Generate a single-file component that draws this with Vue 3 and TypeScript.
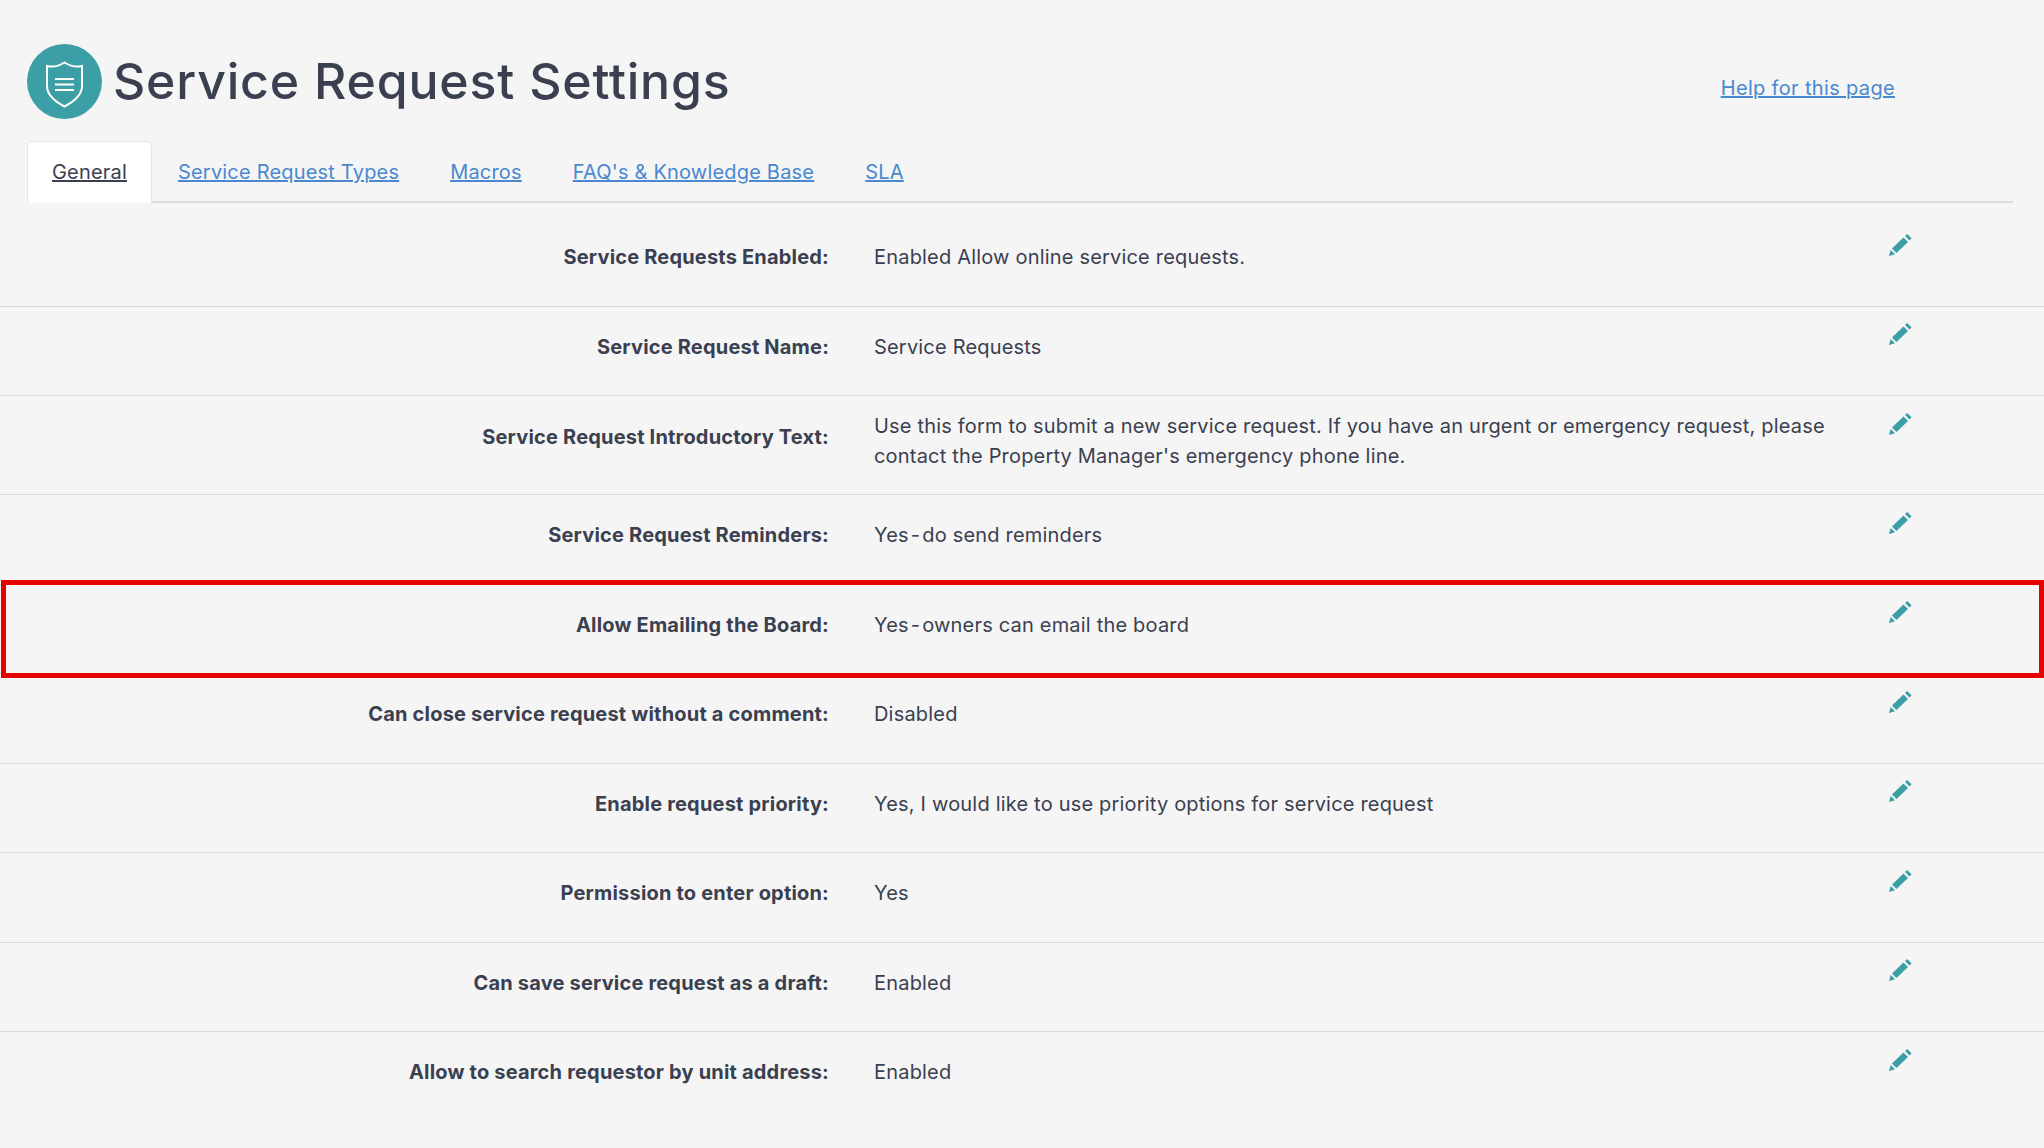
<script setup lang="ts">
interface Row { label: string; lines: string; tall?: boolean }
const tabs: string[] = ['Service Request Types', 'Macros', "FAQ's & Knowledge Base", 'SLA']
const rows: Row[] = [
  { label: 'Service Requests Enabled:', lines: 'Enabled Allow online service requests.' },
  { label: 'Service Request Name:', lines: 'Service Requests' },
  { label: 'Service Request Introductory Text:', lines: "Use this form to submit a new service request. If you have an urgent or emergency request, please contact the Property Manager's emergency phone line.", tall: true },
  { label: 'Service Request Reminders:', lines: 'Yes\u200a-\u200ado send reminders' },
  { label: 'Allow Emailing the Board:', lines: 'Yes\u200a-\u200aowners can email the board' },
  { label: 'Can close service request without a comment:', lines: 'Disabled' },
  { label: 'Enable request priority:', lines: 'Yes, I would like to use priority options for service request' },
  { label: 'Permission to enter option:', lines: 'Yes' },
  { label: 'Can save service request as a draft:', lines: 'Enabled' },
  { label: 'Allow to search requestor by unit address:', lines: 'Enabled' },
]
</script>

<template>
  <div class="page">
    <header class="head">
      <div class="badge">
        <svg viewBox="0 0 75 75" width="75" height="75" fill="none" stroke="#fff">
          <path d="M20 22c6 1.500 12 0 17.500-3.500 5.500 3.500 11.500 5 17.500 3.500v20c0 9-7 15-17.500 20.500C27 57 20 51 20 42z" stroke-width="2" />
          <path d="M28 35h19M28 40.500h19M28 46h19" stroke-width="2.200" />
        </svg>
      </div>
      <h1>Service Request Settings</h1>
      <a class="help" href="#">Help for this page</a>
    </header>
    <nav class="tabs">
      <a class="tab active" href="#">General</a>
      <a v-for="t in tabs" :key="t" class="tab" href="#">{{ t }}</a>
    </nav>
    <section class="list">
      <div class="rows">
        <div v-for="r in rows" :key="r.label" class="row" :class="{ tall: r.tall }">
          <div class="label">{{ r.label }}</div>
          <div class="value">{{ r.lines }}</div>
          <svg class="pencil" viewBox="0 0 24 24" width="24" height="24" fill="#3c9fa5">
            <path d="M1 23l1.700-6 4.300 4.300z" />
            <path d="M4 15.500L15.500 4.500l4.500 4.500L8.500 20z" />
            <path d="M17 3l2.200-2 4.300 4.300-2 2.200z" />
          </svg>
        </div>
      </div>
      <div class="box"></div>
    </section>
  </div>
</template>

<style>
html, body { margin: 0; background: #f5f5f5; }
</style>

<style scoped>
.page {
  height: 1148px;
  box-sizing: border-box;
  overflow: hidden;
  background: #f5f5f5;
  color: #3a4050;
  font-family: Inter, "Liberation Sans", sans-serif;
  font-size: 20px;
  letter-spacing: .19px;
  line-height: 30px;
  padding-top: 44px;
}
a { color: #4a88d0; }
.head {
  display: flex;
  align-items: center;
  height: 75px;
  margin: 0 30px 22px 27px;
}
.badge { width: 75px; height: 75px; border-radius: 50%; background: #3c9fa5; flex: none; }
h1 {
  margin: 0 0 0 11px;
  font-size: 50px;
  letter-spacing: .8px;
  line-height: 75px;
  font-weight: 500;
  color: #3a4050;
}
.help { margin-left: auto; margin-right: 119px; margin-top: 12px; letter-spacing: .34px; }
.tabs {
  display: flex;
  margin: 0 31px 0 27px;
  border-bottom: 2px solid #dcdcdc;
  height: 60px;
}
.tab {
  padding: 16px 25.5px 0;
}
.tab.active {
  background: #fff;
  color: #3a4050;
  height: 62px;
  box-sizing: border-box;
  padding: 15px 24px 0;
  border-radius: 5px 5px 0 0;
  border: 1px solid #e6e6e6;
  border-bottom: 0;
  margin-right: .5px;
}
.list { position: relative; }
.row {
  display: grid;
  grid-template-columns: 829px 951px 24px;
  column-gap: 45px;
  padding-top: 15px;
  border-bottom: 1px solid #d8d8d8;
  align-items: start;
}
.row:first-child { padding-top: 29px; }
.row:last-child { border-bottom: 0; }
.label { font-weight: 700; text-align: right; padding: 10px 0 33.5px; }
.value { padding: 10px 0 33.5px; }
.tall .value { padding: 0 0 23px; }
.tall .label { padding: 11px 0 0; }
.pencil { margin-top: .5px; grid-column: 3; margin-left: 18px; }
.box {
  position: absolute;
  left: 1px;
  right: 0;
  top: 377px;
  height: 98px;
  border: 5px solid #e60000;
  box-sizing: border-box;
}
</style>
